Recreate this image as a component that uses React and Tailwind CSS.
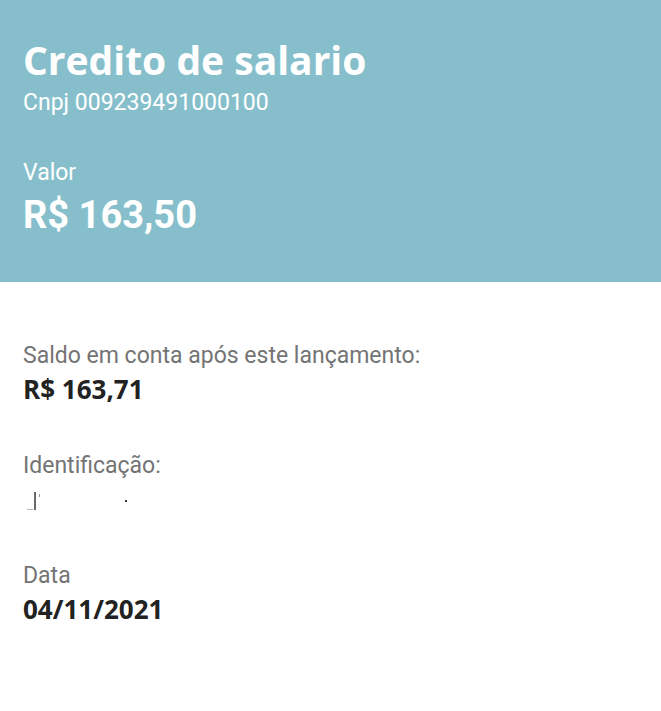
import React from 'react';

const rows = [
  { label: 'Saldo em conta após este lançamento:', value: 'R$ 163,71' },
  { label: 'Identificação:', value: null },
  { label: 'Data', value: '04/11/2021' },
];

export default function App() {
  return (
    <div className="w-[661px] h-[711px] bg-white overflow-hidden font-['Roboto',sans-serif]">
      {/* Header */}
      <div className="h-[282px] bg-[#86bfcb] px-[23px] pt-9 text-white">
        <h1 className="font-['Open_Sans',sans-serif] font-bold text-[39px] leading-[48px]">Credito de salario</h1>
        <p className="text-[23px] leading-7 mt-[5px]">Cnpj 009239491000100</p>
        <p className="text-[23px] leading-7 mt-[42px]">Valor</p>
        <p className="font-bold text-[38px] leading-[44px] mt-[6px]">R$ 163,50</p>
      </div>

      {/* Details */}
      <div className="px-[23px] pt-[60px] flex flex-col gap-[47px]">
        {rows.map((row, i) => (
          <div key={i}>
            <p className="text-[23px] leading-7 text-[#747474]">{row.label}</p>
            {row.value ? (
              <p className="font-['Open_Sans',sans-serif] font-bold text-[26px] leading-8 mt-[3px] text-[#222]">{row.value}</p>
            ) : (
              /* identification value is blanked out in the original; only stray marks remain */
              <div className="h-8 mt-[3px] pt-[9px] pl-1 flex items-start">
                <span className="w-[6px] h-px mt-[17px] bg-[#bbb]" />
                <span className="w-[2px] h-[18px] ml-px bg-[#444] opacity-80" />
                <span className="w-px h-[3px] mt-[2px] ml-[3px] bg-[#999]" />
                <span className="w-[2px] h-[2px] mt-2 ml-[85px] bg-[#333]" />
              </div>
            )}
          </div>
        ))}
      </div>
    </div>
  );
}
